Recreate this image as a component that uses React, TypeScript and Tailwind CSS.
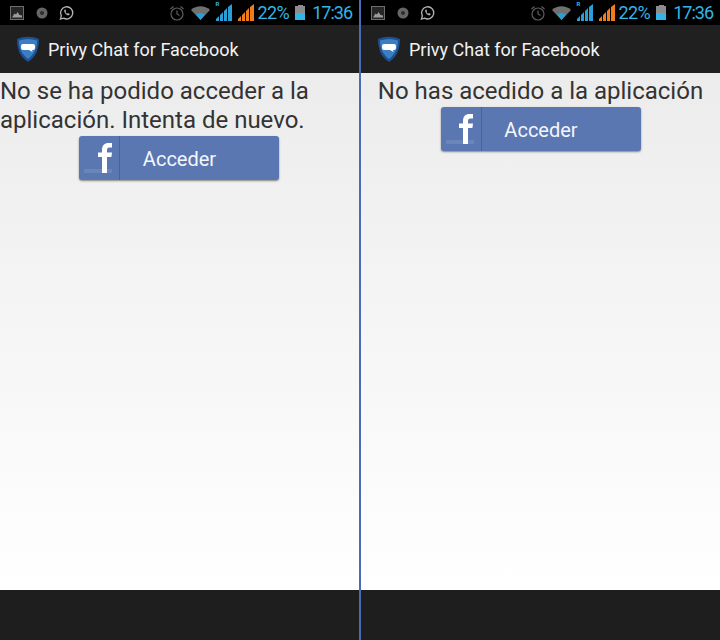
const CellBars = ({ color }: { color: string }) => (
  <svg width="16" height="17" viewBox="0 0 16 17" fill={color}>
    <path d="M0 17v-2l3-3v5zM4 17v-6l3-3v9zM8 17V7l3-3v13zM12 17V3l4-3v17z" />
  </svg>
);

const StatusBar = () => (
  <div className="h-[25px] bg-black flex items-center shrink-0">
    <div className="flex items-center pl-[10px]">
      <svg width="14" height="14" viewBox="0 0 14 14">
        <rect x="0.5" y="0.5" width="13" height="13" fill="#262626" stroke="#6e6e6e" />
        <path d="M2 11.500l2.500-4 1.500 1 1.500-2.500 2 3 2.500.5v2z" fill="#9c9c9c" />
      </svg>
      <svg width="12" height="12" viewBox="0 0 12 12" className="ml-[12px]">
        <circle cx="6" cy="6" r="5.500" fill="#666" />
        <circle cx="6" cy="6" r="2" fill="#2e2e2e" />
      </svg>
      <svg width="15" height="16" viewBox="0 0 16 16" fill="none" className="ml-[11px]">
        <path d="M1.500 14.500l1-3.500a6.500 6.500 0 1 1 2.500 2.500z" stroke="#b4b4b4" strokeWidth="1.400" />
        <path d="M5.500 5c0 3 2.500 5.500 5 5.500l1-1.500-2-1-.8.7c-.8-.4-1.500-1.100-1.800-1.800l.7-.9-1-2z" fill="#b4b4b4" />
      </svg>
    </div>
    <div className="ml-auto flex items-center pr-[7px]">
      <svg width="16" height="16" viewBox="0 0 16 16" fill="none" stroke="#5e5e5e" strokeWidth="1.200">
        <circle cx="8" cy="9" r="6" />
        <path d="M8 5.500V9l2.500 1.500M1.500 4l3-2.500M14.500 4l-3-2.500" />
      </svg>
      <svg width="19" height="14" viewBox="0 0 19 14" className="ml-[6px]">
        <path d="M0 4C5 -1 14 -1 19 4L9.500 14z" fill="#707070" />
        <path d="M5 8.500c3-2 6-2 9 0L9.500 14z" fill="#2a9fd6" />
      </svg>
      <div className="relative ml-[6px]">
        <span className="absolute left-0 top-[-3px] text-[6px] leading-none font-bold text-[#33b5e5]">R</span>
        <CellBars color="#2a9fd6" />
      </div>
      <div className="ml-[6px]">
        <CellBars color="#f07d1a" />
      </div>
      <span className="ml-[4px] text-[18px] leading-none tracking-[-0.6px] text-[#33b5e5]">22%</span>
      <div className="ml-[6px] w-[10px] h-[15px] flex flex-col">
        <div className="mx-auto w-[5px] h-[1px] bg-[#8c8c8c]" />
        <div className="h-[7px] bg-[#8c8c8c]" />
        <div className="h-[7px] bg-[#33b5e5]" />
      </div>
      <span className="ml-[7px] text-[18px] leading-none tracking-[-1px] text-[#33b5e5]">17:36</span>
    </div>
  </div>
);

const ActionBar = () => (
  <div className="h-[48px] bg-[#202020] flex items-center shrink-0 pl-[16px]">
    <svg width="24" height="26" viewBox="0 0 24 26">
      <path d="M1 3C8 0 16 0 23 3c0 10-3 18-11 23C4 21 1 13 1 3z" fill="#1f4f8f" />
      <path d="M3 4.500C9 2.500 15 2.500 21 4.500c0 8-3 14-9 18.500C6 18.500 3 12.500 3 4.500z" fill="#3a7fc4" />
      <path d="M7 8h10a2 2 0 0 1 2 2v2a2 2 0 0 1-2 2h-1l.5 2-3.500-2H7a2 2 0 0 1-2-2v-2a2 2 0 0 1 2-2z" fill="#fff" />
    </svg>
    <span className="ml-[8px] text-[18px] text-[#f2f2f2]">Privy Chat for Facebook</span>
  </div>
);

const LoginButton = () => (
  <button className="relative mx-auto mt-[1px] w-[200px] h-[44px] flex items-stretch rounded-[3px] bg-[#5b77b1] shadow-[0_1px_2px_rgba(0,0,0,0.45)]">
    <div className="relative w-[41px] shrink-0 flex justify-center items-start pl-[11px] pt-[7px] border-r border-[#486399] overflow-hidden">
      <div className="absolute left-[5px] bottom-[7px] w-[28px] h-[4px] bg-white/10" />
      <svg width="14" height="30" viewBox="0 0 14 30" fill="#fff" className="relative">
        <path d="M4 30V14H0V9.500h4V7C4 2.500 6.500 0 10.500 0H14v4.500h-2.500C9.500 4.500 9 5.500 9 7.500v2h5l-.6 4.500H9v16z" />
      </svg>
    </div>
    <span className="flex-1 text-center pr-[40px] text-[20px] leading-[46px] text-[#f4f6fb]">Acceder</span>
  </button>
);

const Phone = ({ message, textClass, contentClass }: { message: string; textClass: string; contentClass: string }) => (
  <div className="flex-1 min-w-0 h-full flex flex-col">
    <StatusBar />
    <ActionBar />
    <div className={`flex-1 flex flex-col bg-gradient-to-b from-[#ececec] to-white pt-[4px] ${contentClass}`}>
      <p className={`text-[24px] leading-[29px] text-[#333333] ${textClass}`}>{message}</p>
      <LoginButton />
    </div>
    <div className="h-[50px] bg-[#1e1e1e] shrink-0" />
  </div>
);

export default function App() {
  return (
    <div className="w-[720px] h-[640px] flex overflow-hidden font-['Roboto',sans-serif] bg-black">
      <Phone message="No se ha podido acceder a la aplicación. Intenta de nuevo." textClass="text-left" contentClass="pr-[1px]" />
      <div className="w-[2px] shrink-0 bg-[#4a6cb8]" />
      <Phone message="No has acedido a la aplicación" textClass="text-center" contentClass="" />
    </div>
  );
}
